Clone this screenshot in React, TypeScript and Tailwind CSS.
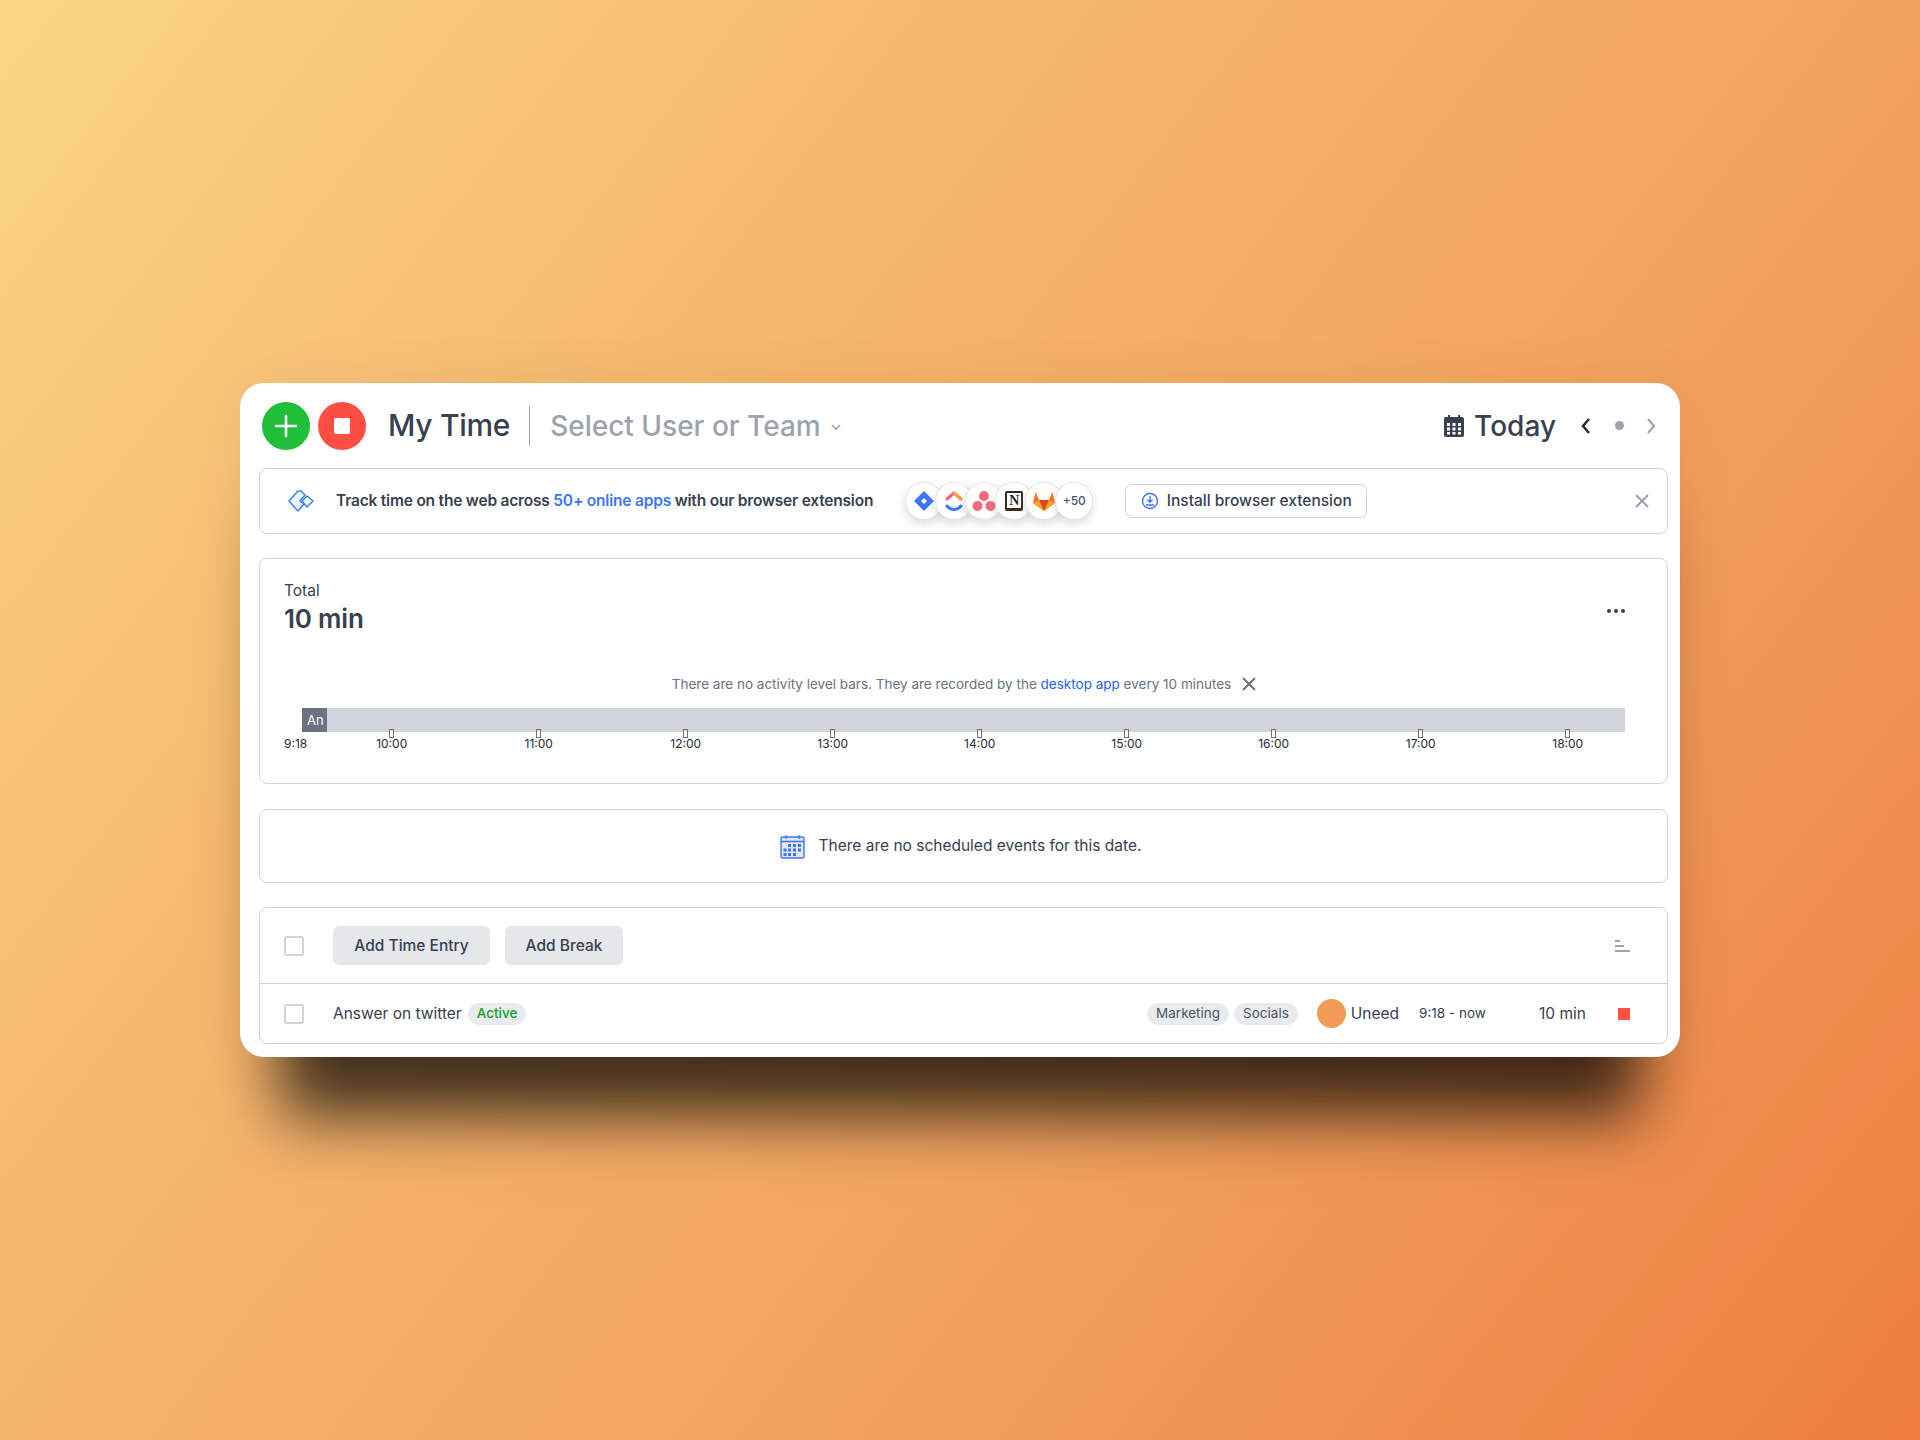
import React from "react";

const ticks = ["10:00","11:00","12:00","13:00","14:00","15:00","16:00","17:00","18:00"];

function Circle({ children }: { children: React.ReactNode }) {
  return (
    <div className="w-[38px] h-[38px] -mr-[8px] rounded-full bg-white border border-[#e5e7eb] shadow-[0_4px_10px_rgba(107,114,128,0.25)] flex items-center justify-center shrink-0">
      {children}
    </div>
  );
}

function Check() {
  return <div className="w-[20px] h-[20px] rounded-[3px] border-2 border-[#d1d5db] bg-white shrink-0" />;
}

function Tag({ children }: { children: React.ReactNode }) {
  return <span className="h-[22px] px-[9px] rounded-full bg-[#e9ecee] text-[13.5px] text-[#4b5563] flex items-center">{children}</span>;
}

export default function App() {
  return (
    <div className="min-h-screen flex items-center justify-center bg-[linear-gradient(128deg,#fbd586_0%,#f6b970_30%,#f2a45f_62%,#ee7d41_100%)] font-['Inter','Liberation_Sans',sans-serif] text-[#374151]">
      <div className="w-[1440px] h-[674px] bg-white rounded-[24px] pl-[19px] pr-[12px] flex flex-col shadow-[0_100px_60px_-40px_rgba(0,0,0,0.72),0_0_60px_rgba(0,0,0,0.06)]">
        {/* header */}
        <div className="h-[85px] shrink-0 flex items-center">
          <div className="w-[48px] h-[48px] ml-[3px] rounded-full bg-[#1fbf38] flex items-center justify-center">
            <svg width="24" height="24" viewBox="0 0 24 24" fill="none" stroke="white" strokeWidth="2.6" strokeLinecap="round"><path d="M12 2v20M2 12h20" /></svg>
          </div>
          <div className="w-[48px] h-[48px] ml-[8px] rounded-full bg-[#ff4f42] flex items-center justify-center">
            <div className="w-[16px] h-[16px] rounded-[2px] bg-white" />
          </div>
          <span className="ml-[22px] text-[30px] font-medium tracking-[-0.3px] whitespace-nowrap">My Time</span>
          <div className="ml-[19px] w-px h-[40px] bg-[#9ca3af]" />
          <span className="ml-[20px] text-[28px] font-medium text-[#9ca3af] whitespace-nowrap">Select User or Team</span>
          <svg className="ml-[8px] mt-[3px]" width="14" height="14" viewBox="0 0 14 14" fill="none" stroke="#9ca3af" strokeWidth="1.6"><path d="M3 5l4 4 4-4" /></svg>
          <svg className="ml-auto" width="22" height="24" viewBox="0 0 22 24" fill="#374151">
            <path d="M5 1h2v3H5zM15 1h2v3h-2z" />
            <path d="M3 3h16a2 2 0 0 1 2 2v16a2 2 0 0 1-2 2H3a2 2 0 0 1-2-2V5a2 2 0 0 1 2-2z" />
            <g fill="white">
              <rect x="4" y="9" width="3" height="3" /><rect x="9.5" y="9" width="3" height="3" /><rect x="15" y="9" width="3" height="3" />
              <rect x="4" y="13.5" width="3" height="3" /><rect x="9.5" y="13.5" width="3" height="3" /><rect x="15" y="13.5" width="3" height="3" />
              <rect x="4" y="18" width="3" height="2.5" /><rect x="9.5" y="18" width="3" height="2.5" /><rect x="15" y="18" width="3" height="2.5" />
            </g>
          </svg>
          <span className="ml-[9px] text-[28px] font-medium whitespace-nowrap">Today</span>
          <svg className="ml-[20px]" width="20" height="20" viewBox="0 0 20 20" fill="none" stroke="#1f2937" strokeWidth="2.4"><path d="M13 3l-6 7 6 7" /></svg>
          <div className="ml-[19px] w-[9px] h-[9px] rounded-full bg-[#9ca3af]" />
          <svg className="ml-[17px] mr-[7px]" width="20" height="20" viewBox="0 0 20 20" fill="none" stroke="#9ca3af" strokeWidth="2"><path d="M7 3l6 7-6 7" /></svg>
        </div>

        {/* banner */}
        <div className="h-[66px] shrink-0 rounded-[8px] border border-[#d1d5db] flex items-center">
          <svg className="ml-[27px]" width="28" height="24" viewBox="0 0 28 24" fill="none" stroke="#3b82f6" strokeWidth="1.5" strokeLinejoin="round">
            <path d="M11 2L2 12l9 10 6-7-4-3 5-6-4-4z" fill="#eff6ff" />
            <path d="M20 7l6 5-6 6-5-6z" />
          </svg>
          <p className="ml-[21px] text-[15.5px] font-semibold whitespace-nowrap tracking-[-0.2px]">
            Track time on the web across <span className="text-[#3b76f6]">50+ online apps</span> with our browser extension
          </p>
          <div className="ml-[32px] flex items-center">
            <Circle>
              <svg width="22" height="22" viewBox="0 0 22 22"><path d="M11 1l10 10-10 10L1 11z" fill="#3b76f6" /><path d="M11 8l3 3-3 3-3-3z" fill="white" /></svg>
            </Circle>
            <Circle>
              <svg width="20" height="24" viewBox="0 0 20 24" fill="none" strokeWidth="3" strokeLinecap="round" strokeLinejoin="round">
                <path d="M3 10l7-6 7 6" stroke="#f2637e" />
                <path d="M10 4l7 6" stroke="#f9a23f" />
                <path d="M3 17c4 5 10 5 14 0" stroke="#3b76f6" />
              </svg>
            </Circle>
            <Circle>
              <svg width="24" height="22" viewBox="0 0 24 22" fill="#f56a7a"><circle cx="12" cy="6" r="5" /><circle cx="5.5" cy="16" r="5" /><circle cx="18.5" cy="16" r="5" /></svg>
            </Circle>
            <Circle>
              <div className="w-[18px] h-[20px] border-2 border-[#3b2a20] border-b-[3px] border-r-[2px] rounded-[2px] flex items-center justify-center font-['Liberation_Serif',serif] font-bold text-[14px] leading-none text-[#1f2937]">N</div>
            </Circle>
            <Circle>
              <svg width="24" height="22" viewBox="0 0 24 22">
                <path d="M12 21L1 13l2.5-11 3.5 8h10l3.5-8L23 13z" fill="#fc6d26" />
                <path d="M12 21L7 10h10z" fill="#e24329" />
                <path d="M12 21L1 13l6-3zM12 21l11-8-6-3z" fill="#fca326" />
              </svg>
            </Circle>
            <div className="w-[38px] h-[38px] rounded-full bg-white border border-[#e5e7eb] shadow-[0_4px_10px_rgba(107,114,128,0.25)] flex items-center justify-center text-[12px] font-medium text-[#4b5563] shrink-0">+50</div>
          </div>
          <button className="ml-[32px] h-[34px] w-[242px] rounded-[7px] border border-[#d1d5db] flex items-center justify-center gap-[8px] text-[15.5px] font-medium whitespace-nowrap">
            <svg width="18" height="18" viewBox="0 0 18 18" fill="none" stroke="#3b76f6" strokeWidth="1.4" strokeLinecap="round"><circle cx="9" cy="9" r="7.5" /><path d="M9 4.5v5.5M6.8 8L9 10.2 11.2 8M5.5 13h7" /></svg>
            Install browser extension
          </button>
          <svg className="ml-auto mr-[17px]" width="16" height="16" viewBox="0 0 16 16" fill="none" stroke="#9ca3af" strokeWidth="2"><path d="M2 2l12 12M14 2L2 14" /></svg>
        </div>

        {/* total */}
        <div className="mt-[24px] h-[226px] shrink-0 rounded-[8px] border border-[#d1d5db] pl-[24px] pr-[42px] pt-[22px] flex flex-col">
          <div className="flex items-center justify-between">
            <div className="flex flex-col">
              <span className="text-[15.5px] leading-[20px]">Total</span>
              <span className="text-[26px] leading-[36px] font-semibold tracking-[-0.2px]">10 min</span>
            </div>
            <div className="flex gap-[3px] -mr-[0px] mt-[4px]">
              <div className="w-[4px] h-[4px] rounded-full bg-[#374151]" />
              <div className="w-[4px] h-[4px] rounded-full bg-[#374151]" />
              <div className="w-[4px] h-[4px] rounded-full bg-[#374151]" />
            </div>
          </div>
          <div className="mt-[37px] flex items-center justify-center gap-[10px] pl-[20px] h-[20px]">
            <p className="text-[13.5px] text-[#6b7280] whitespace-nowrap">
              There are no activity level bars. They are recorded by the <span className="text-[#2563eb]">desktop app</span> every 10 minutes
            </p>
            <svg width="16" height="16" viewBox="0 0 16 16" fill="none" stroke="#6b7280" strokeWidth="2"><path d="M2 2l12 12M14 2L2 14" /></svg>
          </div>
          <div className="mt-[14px] ml-[18px] h-[24px] bg-[#d1d5db] flex shrink-0">
            <div className="w-[25px] h-full bg-[#6b7280] text-white text-[13px] leading-[24px] pl-[5px] overflow-hidden">An</div>
          </div>
          <div className="flex text-[12px] leading-[14px] text-[#1f2937]">
            <div className="w-[36px] mt-[5px] text-center">9:18</div>
            <div className="flex ml-[11px]">
              {ticks.map((t) => (
                <div key={t} className="w-[147px] flex flex-col items-center -mt-[3px]">
                  <div className="w-[5px] h-[9px] border border-[#6b7280] mb-[-1px] bg-white/40" />
                  <span>{t}</span>
                </div>
              ))}
            </div>
          </div>
        </div>

        {/* schedule */}
        <div className="mt-[25px] h-[74px] shrink-0 rounded-[8px] border border-[#d1d5db] flex items-center justify-center gap-[14px] pr-[6px]">
          <svg width="25" height="25" viewBox="0 0 25 25" fill="none">
            <rect x="1" y="3" width="23" height="21" rx="1.5" fill="#e5e7eb" stroke="#3b76f6" strokeWidth="1.4" />
            <path d="M1 7.5h23M6 1v4M19 1v4" stroke="#3b76f6" strokeWidth="1.3" />
            <g fill="#3b76f6">
              <rect x="8" y="10" width="3" height="3" /><rect x="13" y="10" width="3" height="3" /><rect x="18" y="10" width="3" height="3" />
              <rect x="3.5" y="14.5" width="3" height="3" /><rect x="8" y="14.5" width="3" height="3" /><rect x="13" y="14.5" width="3" height="3" /><rect x="18" y="14.5" width="3" height="3" />
              <rect x="3.5" y="19" width="3" height="3" /><rect x="8" y="19" width="3" height="3" /><rect x="13" y="19" width="3" height="3" />
            </g>
          </svg>
          <span className="text-[15.5px] whitespace-nowrap">There are no scheduled events for this date.</span>
        </div>

        {/* table */}
        <div className="mt-[24px] h-[137px] shrink-0 rounded-[8px] border border-[#d1d5db] flex flex-col">
          <div className="h-[76px] shrink-0 border-b border-[#d1d5db] flex items-center pl-[24px] pr-[37px]">
            <Check />
            <button className="ml-[29px] h-[39px] w-[157px] rounded-[6px] bg-[#e5e7eb] text-[15.5px] font-medium">Add Time Entry</button>
            <button className="ml-[15px] h-[39px] w-[118px] rounded-[6px] bg-[#e5e7eb] text-[15.5px] font-medium">Add Break</button>
            <svg className="ml-auto" width="15" height="14" viewBox="0 0 15 14" fill="#9ca3af"><rect x="0" y="1" width="5" height="2" /><rect x="0" y="6" width="9" height="2" /><rect x="0" y="11" width="15" height="2" /></svg>
          </div>
          <div className="flex-1 flex items-center pl-[24px] pr-[37px]">
            <Check />
            <span className="ml-[29px] text-[15.5px] whitespace-nowrap">Answer on twitter</span>
            <span className="ml-[6px] h-[22px] px-[9px] rounded-full bg-[#e9ecee] text-[13.5px] font-medium text-[#15a02a] flex items-center">Active</span>
            <div className="ml-auto flex items-center">
              <Tag>Marketing</Tag>
              <div className="w-[5px]" />
              <Tag>Socials</Tag>
              <div className="ml-[19px] w-[29px] h-[29px] rounded-full bg-[#f19b56]" />
              <span className="ml-[5px] text-[15.5px] whitespace-nowrap">Uneed</span>
              <span className="ml-[20px] w-[65px] text-[13.5px] whitespace-nowrap">9:18 - now</span>
              <span className="ml-[55px] text-[15.5px] whitespace-nowrap">10 min</span>
              <div className="ml-[32px] w-[12px] h-[12px] rounded-[1px] bg-[#ff4f42]" />
            </div>
          </div>
        </div>
      </div>
    </div>
  );
}
